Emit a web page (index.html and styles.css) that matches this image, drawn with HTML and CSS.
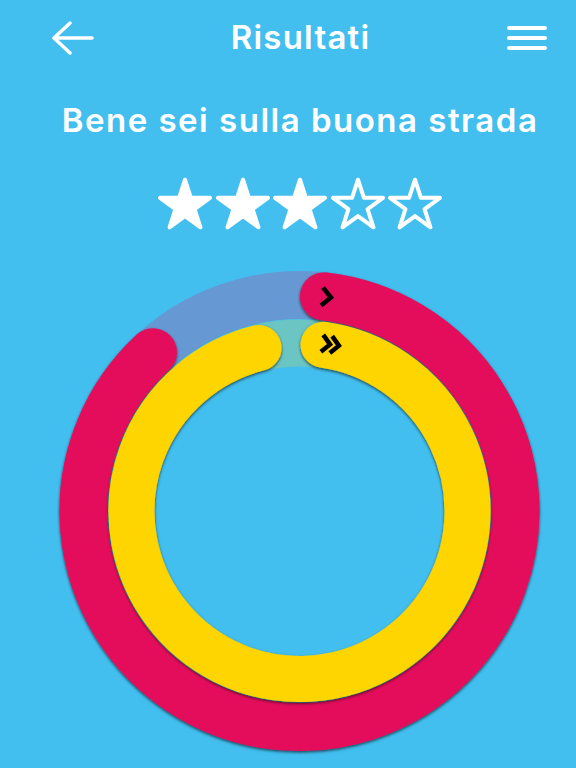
FILE: index.html
```html
<!DOCTYPE html>
<html lang="it">
<head>
<meta charset="utf-8">
<title>Risultati</title>
<link rel="stylesheet" href="styles.css">
</head>
<body>
<div class="app">
  <header class="topbar">
    <button class="icon-btn back" aria-label="Indietro">
      <svg width="42" height="34" viewBox="0 0 42 34"><path d="M18 2 L2 17 L18 32 M2 17 L40 17" fill="none" stroke="#fff" stroke-width="3.5" stroke-linecap="round" stroke-linejoin="round"/></svg>
    </button>
    <h1 class="title">Risultati</h1>
    <button class="icon-btn menu" aria-label="Menu">
      <svg width="40" height="26" viewBox="0 0 40 26"><path d="M2 3 H38 M2 13 H38 M2 23 H38" fill="none" stroke="#fff" stroke-width="4" stroke-linecap="round"/></svg>
    </button>
  </header>

  <h2 class="subtitle">Bene sei sulla buona strada</h2>

  <div class="stars">
    <svg class="star" width="54" height="54" viewBox="-27 -29 54 54"><path class="star-full" d="M0,-26.3 L5.91,-8.13 L25.01,-8.13 L9.56,3.11 L15.46,21.28 L0,10.05 L-15.46,21.28 L-9.56,3.11 L-25.01,-8.13 L-5.91,-8.13 Z"/></svg>
    <svg class="star" width="54" height="54" viewBox="-27 -29 54 54"><path class="star-full" d="M0,-26.3 L5.91,-8.13 L25.01,-8.13 L9.56,3.11 L15.46,21.28 L0,10.05 L-15.46,21.28 L-9.56,3.11 L-25.01,-8.13 L-5.91,-8.13 Z"/></svg>
    <svg class="star" width="54" height="54" viewBox="-27 -29 54 54"><path class="star-full" d="M0,-26.3 L5.91,-8.13 L25.01,-8.13 L9.56,3.11 L15.46,21.28 L0,10.05 L-15.46,21.28 L-9.56,3.11 L-25.01,-8.13 L-5.91,-8.13 Z"/></svg>
    <svg class="star" width="54" height="54" viewBox="-27 -29 54 54"><path class="star-empty" d="M0,-26.3 L5.91,-8.13 L25.01,-8.13 L9.56,3.11 L15.46,21.28 L0,10.05 L-15.46,21.28 L-9.56,3.11 L-25.01,-8.13 L-5.91,-8.13 Z"/></svg>
    <svg class="star" width="54" height="54" viewBox="-27 -29 54 54"><path class="star-empty" d="M0,-26.3 L5.91,-8.13 L25.01,-8.13 L9.56,3.11 L15.46,21.28 L0,10.05 L-15.46,21.28 L-9.56,3.11 L-25.01,-8.13 L-5.91,-8.13 Z"/></svg>
  </div>

  <div class="rings">
    <svg width="600" height="500" viewBox="0 0 600 500">
      <defs>
        <filter id="ringShadow" x="-10%" y="-10%" width="120%" height="120%">
          <feDropShadow dx="0" dy="1.5" stdDeviation="1.5" flood-color="#000" flood-opacity="0.65"/>
        </filter>
      </defs>
      <circle class="track track-outer" cx="299.5" cy="251" r="216"/>
      <circle class="track track-inner" cx="299.5" cy="251" r="168"/>
      <path class="arc arc-outer" d="M323.95 36.39 A216 216 0 1 1 153.01 92.26"/>
      <path class="arc arc-inner" d="M323.53 84.72 A168 168 0 1 1 258.55 88.06"/>
      <path class="chevron" d="M322 28 L331 37 L322 46" transform="rotate(6.5 326.5 37)"/>
      <path class="chevron" d="M322 76 L330 84.5 L322 93 M331 76 L339 84.5 L331 93" transform="rotate(8 330.5 84.5)"/>
    </svg>
  </div>
</div>
</body>
</html>
```
FILE: styles.css
```css
html, body {
  margin: 0;
  padding: 0;
  background: #42BFEF;
  overflow: hidden;
}

.app {
  width: 600px;
  color: #fff;
  font-family: Inter, "Open Sans", "DejaVu Sans", sans-serif;
}

.topbar {
  height: 76px;
  box-sizing: border-box;
  padding: 0 53px 0 52px;
  display: flex;
  align-items: center;
  justify-content: space-between;
}

.icon-btn {
  background: none;
  border: 0;
  padding: 0;
  margin: 0;
  display: flex;
  cursor: pointer;
}

.icon-btn svg {
  display: block;
}

.title {
  margin: 0;
  padding-bottom: 3px;
  font-size: 33px;
  font-weight: 600;
  line-height: 40px;
  letter-spacing: 1.2px;
}

.subtitle {
  margin: 24px 0 0;
  text-align: center;
  font-size: 33px;
  font-weight: 600;
  line-height: 40px;
  letter-spacing: 1.5px;
}

.stars {
  margin-top: 37px;
  display: flex;
  justify-content: center;
  gap: 3.5px;
}

.star {
  display: block;
}

.star-full {
  fill: #fff;
  stroke: #fff;
  stroke-width: 4;
  stroke-linejoin: round;
}

.star-empty {
  fill: none;
  stroke: #fff;
  stroke-width: 4;
  stroke-linejoin: round;
}

.rings {
  margin-top: 29px;
}

.rings svg {
  display: block;
}

.track {
  fill: none;
}

.track-outer {
  stroke: #6699D4;
  stroke-width: 48;
}

.track-inner {
  stroke: #6BC5C3;
  stroke-width: 47;
}

.arc {
  fill: none;
  stroke-linecap: round;
  filter: url(#ringShadow);
}

.arc-outer {
  stroke: #E30D5C;
  stroke-width: 48;
}

.arc-inner {
  stroke: #FFD500;
  stroke-width: 46;
}

.chevron {
  fill: none;
  stroke: #000;
  stroke-width: 4.5;
  stroke-linejoin: miter;
}
```
